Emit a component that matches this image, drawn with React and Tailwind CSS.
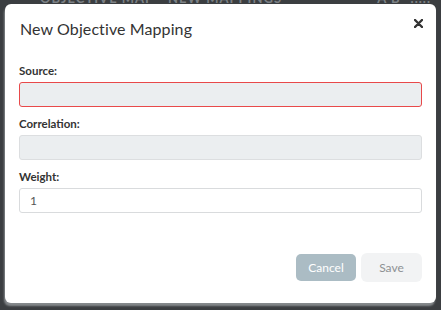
export default function App() {
  const font = { fontFamily: '"Lato", "Noto Sans", sans-serif' };
  return (
    <div className="relative w-[441px] h-[310px] overflow-hidden bg-[#3b3e41]" style={font}>
      {/* backdrop page content */}
      <div className="flex items-start gap-[10px] pl-[40px] pr-[10px] -mt-[11px] text-[13px] font-bold tracking-[1px] text-[#7c8185] uppercase">
        <span>Objective Map - New Mappings</span>
        <span className="ml-auto">a b</span>
        <span>.....</span>
      </div>
      <div className="absolute left-[5px] top-[4px] w-[431px] h-[299px] rounded-[6px] bg-white shadow-[-1px_3px_2px_#85898c] flex flex-col">
        <div className="flex items-start pl-[15px] pr-[13px] pt-[15px]">
          <h1 className="text-[16px] leading-[20px] text-[#333] font-normal tracking-[0.1px]">New Objective Mapping</h1>
          <button className="ml-auto mt-[-1px] w-[10px] h-[10px] flex items-center justify-center">
            <svg width="9" height="9" viewBox="0 0 9 9">
              <path d="M1 1 L8 8 M8 1 L1 8" stroke="#333" strokeWidth="2.4" strokeLinecap="round" />
            </svg>
          </button>
        </div>
        <div className="flex flex-col px-[14px] pt-[24px]">
          <label className="text-[11.5px] leading-[16px] font-bold text-[#333]">Source:</label>
          <div className="mt-[3px] h-[25px] rounded-[3px] border border-[#e8494a] bg-[#ebeef0]"></div>
          <label className="mt-[9px] text-[11.5px] leading-[16px] font-bold text-[#333]">Correlation:</label>
          <div className="mt-[3px] h-[25px] rounded-[3px] border border-[#dcdee0] bg-[#ebeef0]"></div>
          <label className="mt-[9px] text-[11.5px] leading-[16px] font-bold text-[#333]">Weight:</label>
          <div className="mt-[3px] h-[25px] rounded-[3px] border border-[#d9dbdd] bg-white flex items-center pl-[10px] text-[12px] text-[#555]">1</div>
        </div>
        <div className="mt-auto mb-[21px] flex justify-end gap-[5px] pr-[14px]">
          <button className="w-[60px] h-[27px] rounded-[5px] bg-[#abbcc4] text-white text-[12px]">Cancel</button>
          <button className="w-[61px] h-[29px] -mt-[1px] rounded-[6px] bg-[#f2f3f4] text-[#8e9193] text-[12px]">Save</button>
        </div>
      </div>
    </div>
  );
}
